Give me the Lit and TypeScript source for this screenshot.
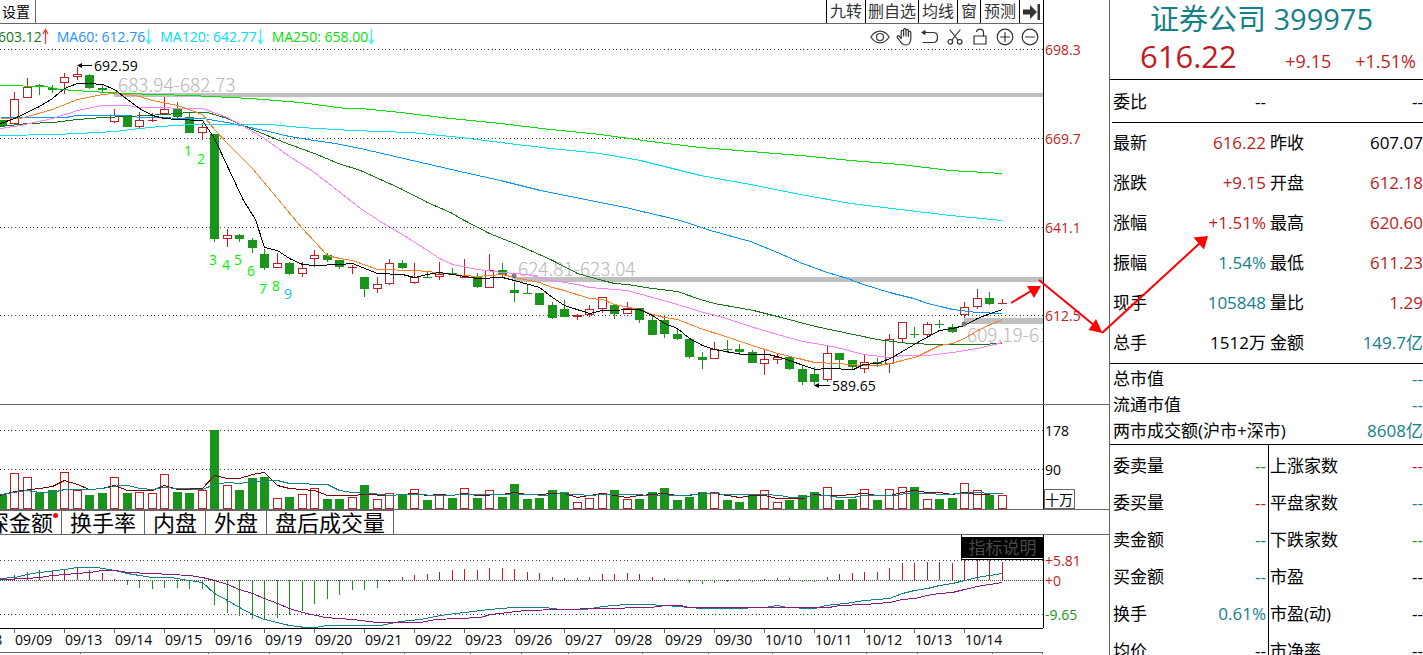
import { LitElement, html, svg, css } from "lit";
import { customElement } from "lit/decorators.js";

type Tone = "up" | "down" | "calm" | "plain";
type Candle = [kind: "r" | "g", high: number, top: number, bottom: number, low: number];

const PLOT_WIDTH = 1043;

/** Centre column of the candle with the given index. */
const column = (i: number) => Math.floor(14.5 + 12.5 * i);

const CANDLES: Candle[] = [
  ["g", 120, 120, 126, 126],
  ["r", 92, 99, 124, 124], ["r", 78, 87, 98, 98], ["g", 84, 85, 87, 95], ["g", 85, 88, 90, 93],
  ["r", 73, 77, 83, 94], ["r", 67, 74, 77, 80], ["g", 74, 75, 88, 89], ["g", 84, 88, 90, 93],
  ["r", 109, 115, 122, 123], ["g", 115, 115, 127, 127], ["r", 112, 120, 127, 129], ["r", 113, 120, 121, 122],
  ["r", 97, 109, 114, 114], ["g", 102, 109, 117, 118], ["g", 113, 117, 133, 133], ["r", 123, 127, 133, 140],
  ["g", 134, 134, 239, 242], ["r", 229, 235, 239, 247], ["g", 234, 235, 239, 242], ["g", 238, 240, 248, 253],
  ["g", 249, 254, 268, 270], ["r", 253, 263, 268, 268], ["g", 262, 263, 274, 275], ["r", 262, 268, 274, 277],
  ["r", 250, 255, 259, 267], ["g", 253, 255, 260, 262], ["g", 260, 260, 267, 269], ["r", 265, 267, 268, 274],
  ["g", 277, 277, 289, 297], ["r", 277, 284, 289, 293], ["r", 259, 263, 284, 285], ["g", 260, 263, 268, 269],
  ["r", 263, 277, 283, 284], ["g", 272, 277, 278, 278], ["r", 262, 274, 277, 280], ["g", 268, 273, 274, 274],
  ["r", 259, 275, 278, 278], ["g", 273, 277, 287, 288], ["r", 254, 270, 288, 288], ["g", 263, 270, 275, 277],
  ["g", 282, 290, 293, 302], ["g", 285, 293, 294, 294], ["g", 293, 293, 305, 305], ["g", 302, 305, 318, 319],
  ["g", 300, 309, 317, 317], ["r", 314, 315, 317, 320], ["r", 305, 309, 315, 317], ["r", 297, 297, 309, 313],
  ["g", 304, 305, 314, 319], ["r", 302, 308, 314, 314], ["g", 308, 308, 320, 323], ["g", 315, 320, 335, 335],
  ["g", 315, 320, 334, 338], ["g", 329, 334, 339, 340], ["g", 338, 339, 357, 359], ["g", 352, 357, 360, 369],
  ["r", 342, 349, 359, 359], ["g", 340, 349, 350, 353], ["g", 344, 349, 352, 355], ["g", 350, 352, 363, 363],
  ["r", 349, 359, 364, 375], ["r", 353, 357, 360, 364], ["g", 356, 357, 369, 370], ["g", 365, 369, 382, 385],
  ["g", 367, 374, 382, 385], ["r", 345, 353, 380, 382], ["g", 353, 353, 360, 369], ["g", 360, 360, 367, 369],
  ["r", 354, 362, 369, 373], ["g", 358, 362, 364, 367], ["r", 334, 339, 364, 373], ["r", 322, 322, 339, 342],
  ["g", 327, 334, 335, 338], ["r", 322, 324, 335, 338], ["g", 320, 324, 325, 328], ["g", 324, 327, 332, 333],
  ["r", 302, 307, 315, 318], ["r", 289, 298, 307, 309], ["g", 292, 298, 304, 305], ["r", 299, 303, 304, 304],
];

const VOLUME_TOPS = [
  495, 473, 477, 493, 490, 472, 490, 495, 493, 477, 493, 492, 493, 474, 492, 493, 490, 430, 485, 490, 478,
  477, 498, 497, 494, 488, 499, 499, 497, 485, 499, 493, 495, 489, 500, 495, 498, 488, 498, 490, 497,
  484, 499, 498, 490, 492, 502, 498, 493, 490, 499, 499, 492, 488, 500, 497, 492, 492, 500, 502, 494,
  490, 502, 500, 495, 492, 487, 500, 499, 489, 500, 489, 487, 487, 499, 499, 498, 483, 490, 495, 495,
];

const MACD_ENDS = [
  575, 572, 570, 570, 570, 567, 570, 573, 579, 585, 588, 589, 588, 588, 589, 589, 605, 613, 616, 619,
  620, 618, 615, 611, 604, 599, 595, 590, 590, 588, 582, 577, 575, 574, 572, 570, 569, 570, 568, 568,
  569, 572, 573, 577, 578, 578, 577, 574, 574, 573, 574, 577, 578, 579, 583, 584, 583, 582, 579, 582,
  579, 578, 578, 582, 582, 577, 574, 573, 572, 572, 568, 563, 563, 562, 562, 563, 560, 560, 560, 562,
];

const AVERAGES: [cls: string, points: string][] = [
  ["ma250", "0,85 45,86 60,89 90,91 125,93 190,95 250,98 300,102 345,108 360,108 400,112 450,118 500,123 550,129 600,134 650,141 700,147 750,151 800,155 850,160 900,164 950,170 1002,173"],
  ["ma120", "0,135 55,134 77,133 115,131 139,128 160,126 190,124 270,124 300,127 352,130 410,132 460,137 500,142 550,148 600,153 640,160 700,175 750,184 800,194 850,203 900,209 950,215 1002,220"],
  ["ma60", "0,117 65,117 77,115 127,115 139,117 202,118 227,122 240,125 264,130 289,136 314,140 335,143 360,148 425,163 464,172 500,180 540,190 590,200 625,207 680,220 710,230 750,241 777,252 802,263 827,272 847,278 863,284 889,292 913,298 927,303 940,306 952,309 977,312 1002,313"],
  ["ma30", "0,126 27,123 52,122 77,119 102,117 127,116 164,114 189,112 207,112 227,118 240,124 252,129 289,144 314,153 338,163 360,170 400,188 427,202 450,212 464,220 489,233 514,243 539,254 552,260 577,273 602,280 614,283 627,284 652,288 677,291 700,299 714,303 753,310 777,316 815,326 853,334 877,339 908,343 939,344 977,344 1002,343"],
  ["ma20", "0,128 20,125 52,118 77,110 102,105 127,105 139,107 202,108 227,117 240,124 264,138 289,156 314,172 360,208 378,220 402,234 427,250 439,258 452,264 477,269 502,272 527,274 539,277 552,280 577,284 589,287 627,290 652,297 677,304 700,311 726,318 750,326 777,334 802,341 815,343 837,347 863,354 890,357 902,355 927,355 952,352 977,348 990,345 1002,342"],
  ["ma10", "0,118 20,118 52,109 77,99 102,94 114,93 127,94 139,96 152,100 177,105 202,114 214,129 227,143 252,168 277,198 302,228 327,255 339,258 352,260 377,269 414,270 427,271 452,274 477,276 489,275 502,274 514,277 539,282 552,287 564,290 589,298 602,299 614,304 639,309 652,314 664,317 677,319 700,328 725,336 752,345 777,353 802,359 814,362 837,363 863,365 878,365 890,363 902,360 917,356 939,345 952,343 964,338 977,330 990,324 1002,319"],
  ["ma5", "0,123 14,118 39,106 52,98 64,88 77,83 89,83 102,84 114,89 127,99 139,108 152,115 164,118 177,119 202,120 214,138 243,200 255,219 264,247 277,250 289,258 302,264 314,265 339,264 352,263 377,273 402,274 414,277 427,274 439,272 452,274 477,278 502,277 514,280 539,287 552,297 564,305 589,313 602,310 639,309 652,315 664,323 677,328 689,338 702,345 714,349 742,354 768,354 780,357 815,369 827,368 853,369 863,364 877,363 890,358 902,351 917,342 939,330 952,328 964,325 977,318 990,313 1002,309"],
];

const VOLUME_SLOW =
  "0,494 27,490 39,492 52,492 64,489 89,489 102,488 120,485 127,485 140,488 152,489 164,487 177,488 202,489 214,484 227,482 239,483 252,481 277,480 289,483 327,484 339,490 352,492 364,492 389,495 402,494 450,495 460,494 530,494 545,495 560,493 577,494 590,495 602,494 632,494 652,495 685,495 705,493 733,494 764,494 780,495 790,497 802,497 814,495 827,495 839,497 852,497 864,495 895,495 905,493 925,493 945,494 977,492 989,493 1002,493";
const VOLUME_FAST =
  "0,495 14,491 39,488 52,486 64,480 77,484 89,489 102,488 114,485 127,490 152,490 164,485 177,489 202,488 214,475 227,478 239,478 252,474 264,472 277,485 289,488 314,490 327,495 352,495 364,494 389,495 414,493 427,495 439,494 452,495 464,493 477,495 502,494 514,492 527,494 564,493 577,497 589,495 602,493 614,495 627,497 639,495 664,493 677,495 689,495 700,493 714,493 727,495 739,497 752,495 764,495 777,498 802,498 814,494 827,495 839,495 864,493 877,495 889,495 902,492 914,490 927,492 939,492 952,494 964,492 977,494 989,494";
const DIF =
  "0,578 14,577 27,574 39,572 64,569 77,567 97,567 114,570 127,573 139,575 152,577 170,577 189,580 202,582 214,593 227,600 239,607 252,614 264,619 289,625 305,627 314,627 327,625 380,625 400,621 420,619 440,615 464,612 489,609 512,607 545,607 560,609 585,609 602,606 625,604 645,604 665,605 690,607 700,608 730,608 765,607 777,605 787,607 810,608 815,608 825,605 845,603 864,600 889,598 902,593 914,590 927,588 939,585 952,583 964,580 977,577 989,575 1002,573";
const DEA =
  "0,579 27,578 39,577 52,575 77,573 89,572 102,570 115,570 127,572 152,573 189,575 202,577 214,580 227,584 239,589 252,593 264,598 277,603 289,608 302,612 325,617 352,619 377,622 420,622 435,619 480,617 490,614 525,610 560,609 600,608 650,607 665,605 680,605 688,607 828,607 840,605 864,604 889,602 902,599 914,598 927,595 939,593 952,592 964,589 977,586 989,584 1002,582";

const SETUP_COUNTS: [text: string, x: number, y: number][] = [
  ["1", 184, 156], ["2", 197, 164], ["3", 209, 265], ["4", 222, 270], ["5", 234, 265],
  ["6", 247, 276], ["7", 259, 294], ["8", 272, 291], ["9", 284, 299],
];

const DATES = [
  "09/08", "09/09", "09/13", "09/14", "09/15", "09/16", "09/19", "09/20", "09/21", "09/22", "09/23",
  "09/26", "09/27", "09/28", "09/29", "09/30", "10/10", "10/11", "10/12", "10/13", "10/14",
];

const FOOT_TICKS = [80, 208, 269, 342, 404, 470, 521, 568, 642, 708, 772, 866, 917, 992, 1042];

const dots = (y: number, cls = "dots") =>
  svg`<line class=${cls} x1="0" x2=${PLOT_WIDTH} y1=${y + 0.5} y2=${y + 0.5}></line>`;

const path = (cls: string, points: string) =>
  svg`<polyline class="curve ${cls}" points=${points} transform="translate(0.5 0.5)"></polyline>`;

const bar = (kind: "r" | "g", c: number, top: number, bottom: number) => {
  const height = Math.max(1, bottom - top);
  if (kind === "g" || height < 3) {
    return svg`<rect class=${kind === "g" ? "fill-down" : "fill-up"} x=${c - 4} y=${top} width="9" height=${height}></rect>`;
  }
  return svg`<rect class="hollow" x=${c - 3.5} y=${top + 0.5} width="8" height=${height - 1}></rect>`;
};

@customElement("price-chart")
class PriceChart extends LitElement {
  static styles = css`
    :host { display: block; font-family: "Open Sans", "Noto Sans CJK SC", sans-serif; }
    .row { display: grid; grid-template-columns: minmax(0, 1fr) 66px; }
    .plot, .scale { display: block; width: 100%; }
    .scale { border-left: 1px solid #000; box-sizing: border-box; overflow: visible; }
    .ruled { border-bottom: 1px solid #666; }
    .price { height: 356px; }
    .volume { height: 104px; }
    .macd { height: 93px; }
    .dates { height: 26px; }
    text { font-size: 14px; fill: #000; }
    .up { fill: #c01c22; }
    .down { fill: #1a941a; }
    .dots { stroke: #444; stroke-dasharray: 1 3 1 3 1 2; shape-rendering: crispEdges; }
    .zero { stroke: #444; stroke-dasharray: 1 1; shape-rendering: crispEdges; }
    .curve { fill: none; stroke-width: 1; shape-rendering: crispEdges; }
    .ma5 { stroke: #000; }
    .ma10 { stroke: #ff7f27; }
    .ma20 { stroke: #ff80ff; }
    .ma30 { stroke: #147814; }
    .ma60 { stroke: #0a96ff; }
    .ma120 { stroke: #00e4f5; }
    .ma250 { stroke: #00e000; }
    .fast { stroke: #800000; }
    .slow { stroke: #148088; }
    .dea { stroke: #8b1a7e; }
    .hollow { fill: #fff; stroke: #bf1e24; shape-rendering: crispEdges; }
    .fill-up { fill: #bf1e24; }
    .fill-down { fill: #1a941a; }
    .band { fill: #bfbfbf; }
    .knot { fill: #777; }
    .band-text { font-size: 19px; fill: #b8b8b8; font-family: "Noto Sans CJK SC", sans-serif; font-weight: 300; }
    .count { fill: #00f000; }
    .count-last { fill: #14c4dc; }
    .ink { stroke: #000; shape-rendering: crispEdges; }
    .head { fill: #000; }
    .tick { stroke: #666; shape-rendering: crispEdges; }
    .unit { fill: #fff; stroke: #666; shape-rendering: crispEdges; }

    .top { border-right: 1px solid #000; margin-right: 65px; }
    .bar { display: flex; justify-content: space-between; height: 23px; border-bottom: 1px solid #666; }
    .group { display: flex; }
    button { font: inherit; margin: 0; padding: 0; border: 0; background: none; color: inherit; cursor: pointer; white-space: nowrap; }
    .setup { font-size: 14px; line-height: 23px; padding: 0 5px 0 2px; border-right: 1px solid #666; }
    .tool { font-size: 16px; line-height: 23px; padding: 0 3px; border-left: 1px solid #000; color: #333; }
    .snug { padding: 0 2px; }
    .jump { width: 24px; display: grid; place-items: center; padding: 0; }
    .info { display: flex; justify-content: space-between; height: 24px; }
    .legend { display: flex; gap: 7px; margin-left: -2px; font-size: 14px; line-height: 26px; white-space: nowrap; }
    .entry { display: flex; align-items: center; height: 26px; }
    .c30 { color: #147814; }
    .c60 { color: #1e90ff; }
    .c120 { color: #00dcf0; }
    .c250 { color: #00e000; }
    .icons { display: flex; padding: 2px 1px 0 0; }
    .icon { width: 25px; height: 22px; display: grid; place-items: center; }
    .glyph { fill: none; stroke: #333; stroke-width: 1.2; stroke-linecap: round; stroke-linejoin: round; }

    .tabs { display: flex; height: 24px; border-bottom: 1px solid #666; overflow: hidden; }
    .strip { display: flex; margin-left: -21px; box-shadow: inset 0 1px 0 #666; }
    .tab { font-size: 22px; line-height: 24px; height: 24px; padding: 0 8px; border-right: 1px solid #666; }
    .marked { position: relative; }
    .marked::after { content: ""; position: absolute; right: 3px; top: 3px; width: 5px; height: 5px; border-radius: 50%; background: #f00; }
    .pane { position: relative; }
    .note { position: absolute; right: 66px; top: 0; padding: 2px 0 1px; border: solid #000; border-width: 0 0 1px 1px; background: #fff; }
    .note-button { display: block; width: 81px; height: 21px; background: #000; color: #484848; font-size: 17px; line-height: 21px; }
  `;

  private tools = [
    { label: "九转", snug: false }, { label: "删自选", snug: true }, { label: "均线", snug: false },
    { label: "窗", snug: false }, { label: "预测", snug: false },
  ];

  private trend(up: boolean) {
    return html`<svg width="8" height="18" viewBox="0 0 8 18" aria-hidden="true">
      <path d=${up ? "M3.5 16V2M1 6L3.500 1.500L6 6" : "M3.500 1V15M1 11.500L3.500 15.500L6 11.500"}
        fill="none" stroke=${up ? "#ff3232" : "#32f0ff"} stroke-width="1.2"></path></svg>`;
  }

  private icon(label: string, shape: unknown) {
    return html`<button class="icon" aria-label=${label}>
      <svg class="glyph" width="20" height="20" viewBox="0 0 20 20">${shape}</svg></button>`;
  }

  private header() {
    return html`
      <div class="top">
        <div class="bar">
          <button class="setup">设置</button>
          <div class="group">
            ${this.tools.map((t) => html`<button class="tool ${t.snug ? "snug" : ""}">${t.label}</button>`)}
            <button class="tool jump" aria-label="最新">
              <svg width="20" height="18" viewBox="0 0 20 18">
                <path d="M1 6.500H8V2L15 9L8 16V11.500H1Z" fill="#333"></path>
                <rect x="15.500" y="1" width="2.500" height="16" fill="#333"></rect>
              </svg>
            </button>
          </div>
        </div>
        <div class="info">
          <div class="legend">
            <span class="entry c30">603.12${this.trend(true)}</span>
            <span class="entry c60">MA60: 612.76${this.trend(false)}</span>
            <span class="entry c120">MA120: 642.77${this.trend(false)}</span>
            <span class="entry c250">MA250: 658.00${this.trend(false)}</span>
          </div>
          <div class="icons">
            ${this.icon("显示", svg`<path d="M0.800 10C3.500 6 6.500 4.200 10 4.200S16.500 6 19.200 10C16.500 14 13.500 15.800 10 15.800S3.500 14 0.800 10Z"></path><circle cx="10" cy="10" r="3.500"></circle>`)}
            ${this.icon("拖动", svg`<path d="M6.200 11V4.500a1.200 1.200 0 0 1 2.400 0V9M8.600 9V2.800a1.200 1.200 0 0 1 2.400 0V9M11 9V3.500a1.200 1.200 0 0 1 2.400 0V9.500M13.400 9.500V5.500a1.200 1.200 0 0 1 2.400 0V11.500C15.800 15.500 13.800 18 10.600 18C7.500 18 6.500 16.500 5 14L2.300 10.300C1.600 9 3.300 8.200 4.200 9.200L6.200 11.500"></path>`)}
            ${this.icon("撤销", svg`<path d="M3 5.500H13C16 5.500 17.500 7.500 17.500 10.200S16 15.500 13 15.500H3"></path><path d="M2 5.500L5 3.800V7.200Z" fill="#333"></path>`)}
            ${this.icon("剪切", svg`<path d="M5 3L13 13M15 3L7 13"></path><circle cx="5.300" cy="14.800" r="2.300"></circle><circle cx="14.700" cy="14.800" r="2.300"></circle>`)}
            ${this.icon("锁定", svg`<rect x="4" y="9" width="12" height="8"></rect><path d="M6.500 4.500C7 3 8.300 2.200 10 2.200C12.300 2.200 13.500 3.800 13.500 5.500V9"></path>`)}
            ${this.icon("放大", svg`<circle cx="10" cy="10" r="7.800"></circle><path d="M5.500 10H14.500M10 5.500V14.500"></path>`)}
            ${this.icon("缩小", svg`<circle cx="10" cy="10" r="7.800"></circle><path d="M5.500 10H14.500"></path>`)}
          </div>
        </div>
      </div>`;
  }

  private candles() {
    return CANDLES.map(([kind, high, top, bottom, low], n) => {
      const c = column(n - 1);
      return svg`<rect class=${kind === "g" ? "fill-down" : "fill-up"} x=${c} y=${high} width="1" height=${low - high}></rect>
        ${bar(kind, c, top, bottom)}`;
    });
  }

  private callout(x: number, y: number, length: number, text: string) {
    return svg`<path class="head" d="M${x} ${y + 0.5}l5 -2.500v5z"></path>
      <line class="ink" x1=${x + 4} x2=${x + length} y1=${y + 0.5} y2=${y + 0.5}></line>
      <text x=${x + length + 2} y=${y + 6}>${text}</text>`;
  }

  render() {
    return html`
      ${this.header()}
      <div class="row ruled">
        <svg class="plot price" viewBox="0 48 1043 356" preserveAspectRatio="xMaxYMin slice">
          ${[49, 138, 227, 315].map((y) => dots(y))}
          <rect class="band" x="114" y="93" width="929" height="4"></rect>
          <rect class="band" x="514" y="277" width="529" height="5"></rect>
          <rect class="band" x="964" y="318" width="79" height="6"></rect>
          <text class="band-text" x="118" y="92">683.94-682.73</text>
          <text class="band-text" x="518" y="276">624.81-623.04</text>
          <text class="band-text" x="967" y="342">609.19-61</text>
          ${this.candles()}
          ${AVERAGES.map(([cls, points]) => path(cls, points))}
          <circle class="knot" cx="514" cy="276" r="2.500"></circle>
          <circle class="knot" cx="964" cy="324" r="2.500"></circle>
          ${this.callout(77, 65, 15, "692.59")}
          ${this.callout(814, 385, 16, "589.65")}
          ${SETUP_COUNTS.map(([t, x, y]) => svg`<text class=${t === "9" ? "count-last" : "count"} x=${x} y=${y}>${t}</text>`)}
        </svg>
        <svg class="scale price" viewBox="1044 48 65 356" preserveAspectRatio="xMinYMin">
          <text class="up" x="1045" y="55">698.3</text>
          <text class="up" x="1045" y="144">669.7</text>
          <text class="up" x="1045" y="233">641.1</text>
          <text class="up" x="1045" y="321">612.5</text>
        </svg>
      </div>
      <div class="row ruled">
        <svg class="plot volume" viewBox="0 405 1043 104" preserveAspectRatio="xMaxYMin slice">
          ${[430, 469].map((y) => dots(y))}
          ${VOLUME_TOPS.map((top, n) => bar(CANDLES[n][0], column(n - 1), top, 509))}
          ${path("fast", VOLUME_FAST)}
          ${path("slow", VOLUME_SLOW)}
        </svg>
        <svg class="scale volume" viewBox="1044 405 65 104" preserveAspectRatio="xMinYMin">
          <text x="1045" y="436">178</text>
          <text x="1045" y="475">90</text>
          <rect class="unit" x="1044.500" y="489.500" width="30" height="19"></rect>
          <text x="1045" y="505">十万</text>
        </svg>
      </div>
      <div class="tabs">
        <div class="strip">
          <button class="tab marked">深金额</button>
          <button class="tab">换手率</button>
          <button class="tab">内盘</button>
          <button class="tab">外盘</button>
          <button class="tab">盘后成交量</button>
        </div>
      </div>
      <div class="row pane">
        <svg class="plot macd" viewBox="0 535 1043 93" preserveAspectRatio="xMaxYMin slice">
          ${dots(560)}${dots(580, "zero")}${dots(614)}
          ${MACD_ENDS.map((end, i) => svg`<rect class=${end < 580 ? "fill-up" : "fill-down"} x=${column(i)}
            y=${Math.min(end, 580)} width="1" height=${Math.abs(end - 580)}></rect>`)}
          ${path("slow", DIF)}
          ${path("dea", DEA)}
        </svg>
        <svg class="scale macd" viewBox="1044 535 65 93" preserveAspectRatio="xMinYMin">
          <text class="up" x="1045" y="566">+5.81</text>
          <text class="up" x="1045" y="586">+0</text>
          <text class="down" x="1045" y="620">-9.65</text>
        </svg>
        <div class="note"><button class="note-button">指标说明</button></div>
      </div>
      <div class="row">
        <svg class="plot dates" viewBox="0 628 1043 26" preserveAspectRatio="xMaxYMin slice">
          <line class="ink" x1="0" x2="1043" y1="628.500" y2="628.500"></line>
          ${DATES.map((d, n) => svg`<line class="tick" x1=${n * 50 - 35.5} x2=${n * 50 - 35.5} y1="629" y2="633"></line>
            <text x=${n * 50 - 35} y="645">${d}</text>`)}
          <line class="tick" x1="0" x2="1043" y1="652.500" y2="652.500"></line>
          ${FOOT_TICKS.map((x) => svg`<line class="tick" x1=${x + 0.5} x2=${x + 0.5} y1="653" y2="656"></line>`)}
        </svg>
      </div>`;
  }
}

interface Item { name: string; value: string; tone: Tone; }
const item = (name: string, value: string, tone: Tone): Item => ({ name, value, tone });

@customElement("quote-panel")
class QuotePanel extends LitElement {
  static styles = css`
    :host {
      display: block; border-left: 1px solid #666; background: #fff; color: #000;
      font-family: "Open Sans", "Noto Sans CJK SC", sans-serif; font-size: 17px;
    }
    .head { height: 79px; border-bottom: 1px solid #000; }
    .title { margin: 0; padding-right: 10px; font-size: 29px; font-weight: 400; line-height: 38px; text-align: center; color: #148088; }
    .quote { display: flex; align-items: baseline; gap: 24px; padding: 0 7px 0 30px; line-height: 36px; font-size: 18px; }
    .last { font-size: 31px; margin-right: auto; }
    .up { color: #c01c22; }
    .down { color: #1a941a; }
    .calm { color: #148088; }
    .plain { color: #000; }
    table { width: 100%; border-collapse: collapse; table-layout: fixed; }
    th, td { padding: 0; font-weight: 400; white-space: nowrap; }
    th { text-align: left; padding-left: 3px; }
    td { text-align: right; }
    .pairs th { width: 68px; }
    .pairs td:nth-child(2) { width: 85px; padding-right: 2px; }
    .pairs th:nth-child(3) { padding-left: 2px; }
    .ratio { padding-top: 2px; }
    .ratio th, .ratio td { height: 40px; line-height: 24px; }
    .main { margin-left: 2px; border-top: 1px solid #000; }
    .main th, .main td { height: 40px; line-height: 24px; }
    .main .pairs { margin-left: -2px; width: calc(100% + 2px); }
    .totals { border: solid #000; border-width: 1px 0; padding-top: 2px; }
    .totals th, .totals td { height: 26px; line-height: 24px; }
    .totals th { width: 220px; }
    .more { display: grid; grid-template-columns: 159px minmax(0, 1fr); }
    .more th, .more td { height: 37px; line-height: 24px; }
    .more th { width: 88px; }
    .half { padding-top: 2px; }
    .half:first-child { border-right: 1px solid #000; }
    .half:first-child td { padding-right: 2px; }
    .half:last-child th { padding-left: 1px; }
  `;

  private main: [Item, Item][] = [
    [item("最新", "616.22", "up"), item("昨收", "607.07", "plain")],
    [item("涨跌", "+9.15", "up"), item("开盘", "612.18", "up")],
    [item("涨幅", "+1.51%", "up"), item("最高", "620.60", "up")],
    [item("振幅", "1.54%", "calm"), item("最低", "611.23", "up")],
    [item("现手", "105848", "calm"), item("量比", "1.29", "up")],
    [item("总手", "1512万", "plain"), item("金额", "149.7亿", "calm")],
  ];
  private totals = [
    item("总市值", "--", "calm"), item("流通市值", "--", "calm"), item("两市成交额(沪市+深市)", "8608亿", "calm"),
  ];
  private left = [
    item("委卖量", "--", "down"), item("委买量", "--", "up"), item("卖金额", "--", "calm"),
    item("买金额", "--", "calm"), item("换手", "0.61%", "calm"), item("均价", "--", "plain"),
  ];
  private right = [
    item("上涨家数", "--", "up"), item("平盘家数", "--", "calm"), item("下跌家数", "--", "down"),
    item("市盈", "--", "plain"), item("市盈(动)", "--", "plain"), item("市净率", "--", "plain"),
  ];

  private cells(i: Item) {
    return html`<th scope="row">${i.name}</th><td class=${i.tone}>${i.value}</td>`;
  }
  private list(items: Item[]) {
    return html`<table><tbody>${items.map((i) => html`<tr>${this.cells(i)}</tr>`)}</tbody></table>`;
  }

  render() {
    return html`
      <div class="head">
        <h1 class="title">证券公司 399975</h1>
        <div class="quote up"><span class="last">616.22</span><span>+9.15</span><span>+1.51%</span></div>
      </div>
      <div class="ratio">
        <table class="pairs"><tbody><tr><th scope="row">委比</th><td>--</td><th></th><td>--</td></tr></tbody></table>
      </div>
      <div class="main">
        <table class="pairs"><tbody>
          ${this.main.map(([a, b]) => html`<tr>${this.cells(a)}${this.cells(b)}</tr>`)}
        </tbody></table>
      </div>
      <div class="totals">${this.list(this.totals)}</div>
      <div class="more">
        <div class="half">${this.list(this.left)}</div>
        <div class="half">${this.list(this.right)}</div>
      </div>`;
  }
}

@customElement("app-root")
class AppRoot extends LitElement {
  static styles = css`
    :host { display: block; height: 100vh; overflow: hidden; background: #fff; }
    .layout { position: relative; display: grid; grid-template-columns: minmax(0, 1fr) 314px; }
    .forecast { position: absolute; right: 203px; top: 225px; pointer-events: none; }
    .shaft { stroke: #f00; stroke-width: 2; }
    .tip { fill: #f00; }
  `;

  render() {
    return html`
      <div class="layout">
        <price-chart></price-chart>
        <quote-panel></quote-panel>
        <svg class="forecast" width="220" height="120" viewBox="1000 225 220 120" aria-hidden="true">
          <path class="shaft" fill="none" d="M1011 303L1031 291M1039 280L1095 326M1102 333L1200 243"></path>
          <path class="tip" d="M1041 286L1027 286L1034 298ZM1102.500 333L1096 319L1088.500 330ZM1208 236L1193.500 237.500L1204 249.500Z"></path>
        </svg>
      </div>`;
  }
}
